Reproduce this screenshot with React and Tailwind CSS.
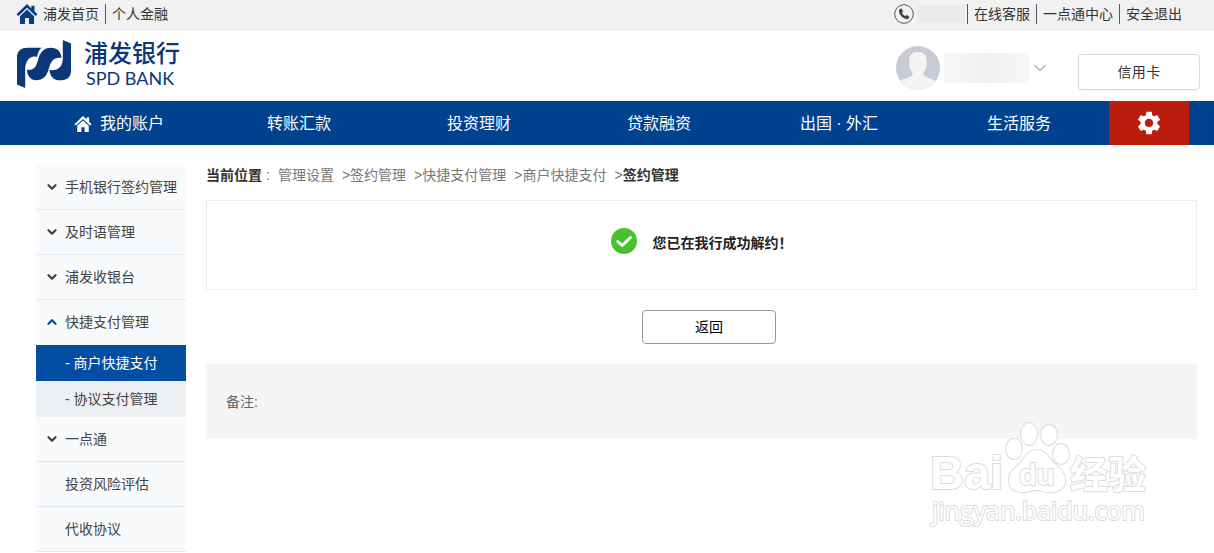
import { ChevronDown } from 'lucide-react';
import { MdSettings } from 'react-icons/md';

const navItems = ['转账汇款', '投资理财', '贷款融资', '出国 · 外汇', '生活服务'];

const sideMenu = [
  { label: '手机银行签约管理', arrow: true },
  { label: '及时语管理', arrow: true },
  { label: '浦发收银台', arrow: true },
  {
    label: '快捷支付管理',
    arrow: true,
    open: true,
    children: [{ label: '商户快捷支付', active: true }, { label: '协议支付管理' }],
  },
  { label: '一点通', arrow: true },
  { label: '投资风险评估' },
  { label: '代收协议' },
];

const crumbs = ['管理设置', '签约管理', '快捷支付管理', '商户快捷支付'];

function HomeIcon({ className }) {
  return (
    <svg viewBox="0 0 20 20" className={className} fill="currentColor" aria-hidden="true">
      <path d="M10 1 L0.5 10.2 L2.2 11.8 L10 4.4 L17.8 11.8 L19.5 10.2 L16.8 7.6 V2.5 H14 V4.9 Z" />
      <path d="M10 6 L3.6 12 V19 H8.2 V13.6 H11.8 V19 H16.4 V12 Z" />
    </svg>
  );
}

function Logo() {
  return (
    <a href="#home" className="flex items-center gap-[13px] pb-0.5 text-[#0b3678]">
      <svg viewBox="0 0 54 48" className="h-12 w-[54px]" fill="currentColor" aria-hidden="true">
        <path d="M0 17 C0 11 4 7.700 11 7.700 H25 C22 9 21 13 20 17 C13 15 8.500 21 8.200 29 V48 L0 44.500 Z" />
        <path d="M10 29.500 C17 31 19 27 21 20 C23 12 27 7.700 34 7.700 C40 7.700 44 11 44.500 18 C37 17 34 21 32 28 C30 36 26 40.300 19 40.300 C14 40.300 10 36 10 29.500 Z" />
        <path d="M54 31 C54 37 50 40.300 43 40.300 C37 40.300 33 37 32.500 30 C41 31 45.500 27 45.800 19 V0 L54 3.500 Z" />
      </svg>
      <span className="flex flex-col">
        <span className="text-2xl/7 font-medium">浦发银行</span>
        <span className="pl-0.5 font-['Lato',sans-serif] text-lg/5">SPD BANK</span>
      </span>
    </a>
  );
}

function Avatar() {
  return (
    <svg viewBox="0 0 44 44" className="size-11" aria-hidden="true">
      <defs>
        <clipPath id="avatar">
          <circle cx="22" cy="22" r="22" />
        </clipPath>
      </defs>
      <g clipPath="url(#avatar)">
        <rect width="44" height="44" fill="#c8cbd5" />
        <path
          d="M22 6 C28 6 31.500 9 30.500 17 C31.500 22 28.500 24 27.500 27 C27 33 38 31 41 37 V44 H3 V37 C6 31 17 33 16.500 27 C15.500 24 12.500 22 13.500 17 C12.500 9 16 6 22 6 Z"
          fill="#f4f4f5"
        />
      </g>
    </svg>
  );
}

function TopBar() {
  return (
    <div className="flex h-[30px] items-center justify-between border-b border-[#e6e6e6] bg-[#f1f1f1] pr-8 pb-0.5 pl-4 text-sm text-[#333]">
      <div className="flex items-center">
        <HomeIcon className="mr-[5px] size-[22px] text-[#0b3c80]" />
        <a href="#spdb" className="border-r border-[#555] pr-1.5">浦发首页</a>
        <a href="#personal" className="pl-1.5">个人金融</a>
      </div>
      <div className="flex items-center">
        <svg viewBox="0 0 20 20" className="mr-1 size-5" aria-hidden="true">
          <circle cx="10" cy="10" r="9.300" fill="none" stroke="#555" />
          <path
            d="M6 5 L7.600 4.600 L9.200 7.500 L8 8.800 C8.800 10.500 9.800 11.400 11.200 12.100 L12.600 11 L15.300 12.700 C15.200 14.300 14.200 15.200 12.900 15.200 C8.800 14.700 5 10.500 4.900 7 C4.900 6.200 5.300 5.400 6 5 Z"
            fill="#444"
          />
        </svg>
        <span className="mr-0.5 h-[18px] w-[47px] bg-[#e9eaeb]" />
        <a href="#service" className="border-l border-[#555] px-1.5">在线客服</a>
        <a href="#center" className="border-l border-[#555] px-1.5">一点通中心</a>
        <a href="#logout" className="border-l border-[#555] pl-1.5">安全退出</a>
      </div>
    </div>
  );
}

function MainNav() {
  return (
    <nav className="flex h-11 bg-[#00428e] pr-[25px] pl-[29px] text-base text-white">
      <a href="#account" className="flex flex-1 items-center justify-center gap-2 pt-0.5">
        <HomeIcon className="size-[18px]" />
        我的账户
      </a>
      {navItems.map((item) => (
        <a key={item} href="#nav" className="flex flex-1 items-center justify-center pt-0.5">
          {item}
        </a>
      ))}
      <button type="button" aria-label="设置" className="grid w-20 place-items-center bg-[#bc1c0b]">
        <MdSettings className="size-7" />
      </button>
    </nav>
  );
}

function SideMenu() {
  return (
    <ul className="w-[150px] shrink-0 bg-[#f8fafb] text-sm text-[#444]">
      {sideMenu.map((item) => (
        <li key={item.label}>
          <a
            href="#menu"
            className={`flex h-[45px] items-center pl-[9px] ${item.open ? 'pb-px' : 'border-b border-[#dfe8f3]'}`}
          >
            <span className="w-5 shrink-0">
              {item.arrow && (
                <ChevronDown
                  size={14}
                  strokeWidth={4}
                  className={item.open ? 'rotate-180 text-[#0a4da2]' : ''}
                />
              )}
            </span>
            <span className="whitespace-nowrap">{item.label}</span>
          </a>
          {item.children?.map((child) => (
            <a
              key={child.label}
              href="#submenu"
              className={`flex h-9 items-center pl-[29px] ${child.active ? 'bg-[#034ea2] text-white' : 'bg-[#ecf0f3]'}`}
            >
              - {child.label}
            </a>
          ))}
        </li>
      ))}
    </ul>
  );
}

function Watermark() {
  return (
    <svg
      viewBox="0 0 224 112"
      className="pointer-events-none absolute right-[62px] bottom-5 h-28 w-56"
      fill="#fff"
      stroke="#dcdcdc"
      strokeWidth="2"
      paintOrder="stroke"
      aria-hidden="true"
    >
      <g className="font-['Liberation_Sans','Noto_Sans_CJK_SC',sans-serif] font-bold">
        <text x="2" y="68" fontSize="47">Bai</text>
        <ellipse cx="86" cy="28" rx="8" ry="10" />
        <ellipse cx="101" cy="13" rx="8" ry="11" />
        <ellipse cx="121" cy="14" rx="8" ry="10" />
        <ellipse cx="133" cy="33" rx="8" ry="10" />
        <path d="M109 29 C119 29 121 39 129 45 C142 54 139 71 124 71 C116 72 113 69 109 69 C104 69 100 72 93 71 C78 70 78 54 88 46 C97 39 98 29 109 29 Z" />
        <text x="91" y="64" fontSize="29">du</text>
        <text x="142" y="67" fontSize="38">经验</text>
      </g>
      <text x="4" y="99" fontSize="25" className="font-['Open_Sans',sans-serif]">jingyan.baidu.com</text>
    </svg>
  );
}

export default function App() {
  return (
    <div className="relative min-h-screen overflow-hidden bg-white font-['Liberation_Sans','Noto_Sans_CJK_SC',sans-serif]">
      <TopBar />
      <header className="flex h-[71px] items-end justify-between pr-3.5 pb-[11px] pl-[17px]">
        <Logo />
        <div className="flex items-end">
          <div className="flex items-center">
            <Avatar />
            <span className="ml-1 h-[30px] w-[86px] bg-linear-to-r from-[#f8f8f8] via-[#f1f1f1] to-[#f7f7f7]" />
            <ChevronDown size={20} className="text-[#b5b5b5]" />
          </div>
          <button
            type="button"
            className="ml-7 h-9 w-[122px] rounded border border-[#d8d8dc] text-sm tracking-wide text-[#333] shadow-xs"
          >
            信用卡
          </button>
        </div>
      </header>
      <MainNav />

      <div className="flex gap-5 pt-5 pr-[17px] pl-9">
        <SideMenu />
        <main className="min-w-0 flex-1">
          <div className="flex h-5 items-center text-sm whitespace-nowrap text-[#777]">
            <strong className="text-[#333]">当前位置</strong>
            <span className="pr-2 pl-1">:</span>
            {crumbs.map((crumb, idx) => (
              <a key={crumb} href="#crumb" className="pr-2">
                {idx > 0 && '>'}
                {crumb}
              </a>
            ))}
            <span>&gt;</span>
            <strong className="text-[#333]">签约管理</strong>
          </div>

          <div className="mt-[15px] flex h-[90px] items-center justify-center gap-4 border border-[#ececec] pb-2">
            <svg viewBox="0 0 26 26" className="size-[26px]" aria-hidden="true">
              <circle cx="13" cy="13" r="13" fill="#47c12d" />
              <path
                d="M6.800 13.500 L11.200 17.500 L19.500 9.500"
                fill="none"
                stroke="#fff"
                strokeWidth="3"
                strokeLinecap="round"
                strokeLinejoin="round"
              />
            </svg>
            <strong className="pt-1 text-sm text-[#222]">您已在我行成功解约！</strong>
          </div>

          <div className="mt-5 flex justify-center pl-[15px]">
            <button
              type="button"
              className="h-[34px] w-[134px] rounded border border-[#999] text-sm text-black"
            >
              返回
            </button>
          </div>

          <div className="mt-5 flex h-[75px] items-center bg-[#f5f5f5] px-5 text-sm text-[#666]">
            备注:
          </div>
        </main>
      </div>

      <Watermark />
    </div>
  );
}
